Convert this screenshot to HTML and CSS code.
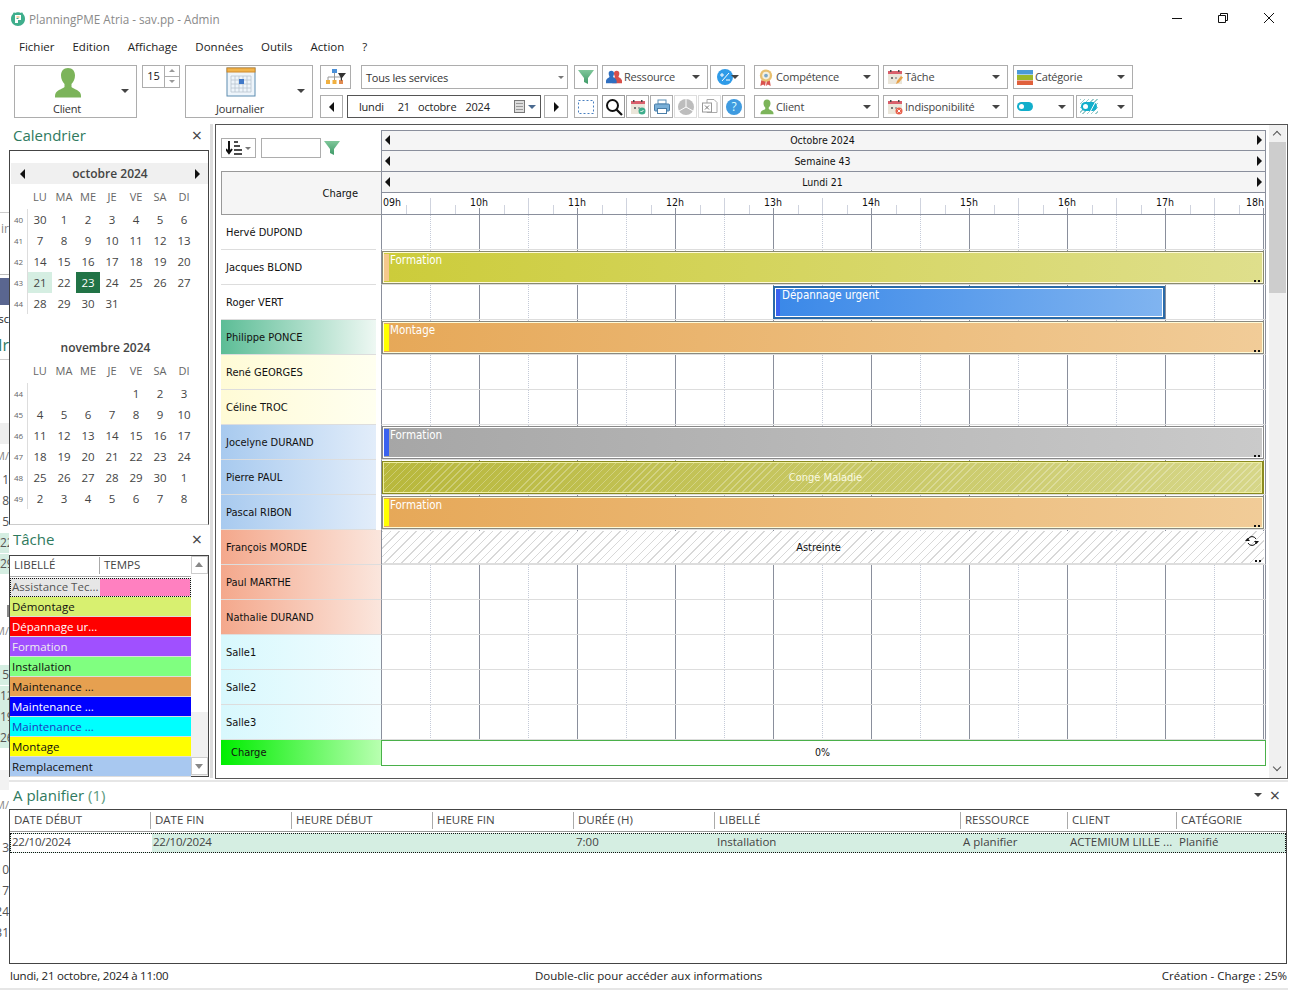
FILE: index.html
```
<!DOCTYPE html>
<html lang="fr">
<head>
<meta charset="utf-8">
<title>PlanningPME Atria</title>
<link rel="stylesheet" href="styles.css">
</head>
<body>
<svg class="defs" width="0" height="0">
  <defs>
    <linearGradient id="fg" x1="0" y1="0" x2="0" y2="1"><stop offset="0" stop-color="#7fc79a"/><stop offset="1" stop-color="#3f9a68"/></linearGradient>
    <symbol id="person" viewBox="0 0 28 32"><path d="M14 1c4.500 0 7 3 7 7.500 0 3.500-1.500 6.500-3.500 8.500v3c1 1.500 6 2.500 8.500 5.500 1 1.500 1 3 1 5H1c0-2 0-3.500 1-5 2.500-3 7.500-4 8.500-5.500v-3C8.500 15 7 12 7 8.500 7 4 9.500 1 14 1z" fill="#7cb45a"/></symbol>
    <symbol id="funnel" viewBox="0 0 16 16"><path d="M0 1h16L10 9v6l-4 -2V9z" fill="url(#fg)"/></symbol>
    <symbol id="cal" viewBox="0 0 16 16"><rect x="1" y="3" width="14" height="12" fill="#ebe6da"/><rect x="1" y="2" width="14" height="3" fill="#d9606c"/><rect x="3" y="1" width="1.500" height="2" fill="#444"/><rect x="11" y="1" width="1.500" height="2" fill="#444"/><rect x="4" y="8" width="2" height="2" fill="#777"/><rect x="8" y="8" width="2" height="2" fill="#aaa"/></symbol>
  </defs>
</svg>
<div class="app">
  <div class="strip">
    <span class="bit b1"></span><span class="bit b2">ir</span><span class="bit b3"></span><span class="bit b4"></span><span class="bit b5">sc</span><span class="bit b6">Ir</span><span class="bit b7"></span><span class="bit b8"></span><span class="bit b9">M/</span><span class="bit b10">1</span><span class="bit b11">8</span><span class="bit b12">15</span><span class="bit b13">22</span><span class="bit b14">29</span><span class="bit b15"></span><span class="bit b16">M/</span><span class="bit b17">5</span><span class="bit b18">12</span><span class="bit b19">19</span><span class="bit b20">26</span><span class="bit b21"></span><span class="bit b22">M/</span><span class="bit b23">3</span><span class="bit b24">10</span><span class="bit b25">17</span><span class="bit b26">24</span><span class="bit b27">31</span>
  </div>

  <header class="titlebar">
    <svg class="logo" viewBox="0 0 16 16" width="16" height="16"><path d="M3 3c0-1 1-2 2-1 1-1 5-1 6 0 1-1 2 0 2 1 1.500 1 2 3 2 5 0 4-3 7-7 7S1 12 1 8c0-2 .5-4 2-5z" fill="#3fae8c"/><path d="M5 4h6v5H8v3H5z" fill="#fff"/><rect x="6.500" y="5.500" width="3" height="1" fill="#e6a24a"/><rect x="6.500" y="7" width="2" height="1" fill="#3fae8c"/></svg>
    <span class="apptitle">PlanningPME Atria - sav.pp - Admin</span>
    <div class="winctl">
      <svg viewBox="0 0 12 12" width="12" height="12"><path d="M1 6.500h10" stroke="#111" fill="none"/></svg>
      <svg viewBox="0 0 12 12" width="12" height="12"><path d="M1.500 3.500h7v7h-7zM3.500 3.500v-2h7v7h-2" stroke="#111" fill="none"/></svg>
      <svg viewBox="0 0 12 12" width="12" height="12"><path d="M1 1l10 10M11 1L1 11" stroke="#111" fill="none"/></svg>
    </div>
  </header>

  <nav class="menu"><span>Fichier</span><span>Edition</span><span>Affichage</span><span>Données</span><span>Outils</span><span>Action</span><span>?</span></nav>

  <section class="toolbar">
    <div class="btn big w-client">
      <svg class="bigicon" width="28" height="32"><use href="#person"/></svg>
      <span class="biglabel">Client</span><i class="caret bigcaret"></i>
    </div>
    <div class="spin"><span class="spinval">15</span><span class="spinarrows"><i class="up"></i><i class="down"></i></span></div>
    <div class="btn big w-journal">
      <svg class="bigicon" viewBox="0 0 30 30" width="30" height="30"><rect x="1" y="1" width="28" height="28" fill="#eef5fb" stroke="#5c8cb0"/><rect x="1" y="1" width="28" height="4" fill="#f0b44c" stroke="#d08a2a"/><path d="M5 9h20M5 13h20M5 17h20M5 21h20M5 25h20M5 9v16M9 9v16M13 9v16M17 9v16M21 9v16M25 9v16" stroke="#b9c4cf" stroke-width=".8" fill="none"/><rect x="13" y="12" width="5" height="5" fill="#3f78c8"/></svg>
      <span class="biglabel">Journalier</span><i class="caret bigcaret"></i>
    </div>

    <div class="col c-mid">
      <div class="r1 gap10">
        <div class="btn w31"><svg viewBox="0 0 22 16" width="22" height="16"><rect x="7" y="0" width="5" height="4" fill="#4a90d9"/><path d="M9.500 4v4M3 11V8h13v3M9.500 8v3" stroke="#999" fill="none"/><rect x="1" y="11" width="4" height="4" fill="#f0b040"/><rect x="7.500" y="11" width="4" height="4" fill="#f0b040"/><rect x="14" y="11" width="4" height="4" fill="#e08a50"/><path d="M13 4h8l-4 5v3l-1-1V9z" fill="#333"/></svg></div>
        <div class="btn select w-service"><span>Tous les services</span><i class="caret tiny"></i></div>
      </div>
      <div class="r2 gap3">
        <div class="btn w23 mr1"><i class="tri left"></i></div>
        <div class="date"><span class="d1">lundi</span><span class="d2">21</span><span class="d3">octobre</span><span class="d4">2024</span>
          <svg class="dcal" viewBox="0 0 12 14" width="12" height="14"><rect x=".5" y=".5" width="10" height="12" fill="#ddd" stroke="#777"/><path d="M2 3h7v1H2zM2 6h7v1H2zM2 9h7v1H2z" fill="#999"/></svg><i class="caret cblue"></i>
        </div>
        <div class="btn w24"><i class="tri right"></i></div>
      </div>
    </div>

    <div class="col c-filter">
      <div class="r1"><div class="btn w24"><svg width="16" height="16"><use href="#funnel"/></svg></div></div>
      <div class="r2"><div class="btn w24"><svg viewBox="0 0 16 16" width="16" height="16"><rect x=".5" y="1.500" width="15" height="13" fill="none" stroke="#4a80c0" stroke-dasharray="2 2"/></svg></div></div>
    </div>

    <div class="col c-res">
      <div class="r1 gap2">
        <div class="btn drop w-res"><svg viewBox="0 0 18 16" width="16" height="16"><path d="M12 1c2 0 3 1 3 3s-1 3-1 4c1 1 3 1 4 4v3H7V11c1-2 3-2 3-3S9 6 9 4s1-3 3-3z" fill="#d84f4a"/><path d="M6 1c2 0 3 1 3 3s-1 3-1 4c1 1 4 2 4 5v2H0v-2c0-3 3-4 4-5 0-1-1-2-1-4s1-3 3-3z" fill="#2f6fc0"/></svg><span>Ressource</span><i class="caret"></i></div>
        <div class="btn w-pct"><svg viewBox="0 0 16 16" width="16" height="16"><circle cx="8" cy="8" r="8" fill="#2f9be8"/><path d="M3 6h4M5 4v4M12 4l-7 8M9 11h4" stroke="#fff" fill="none"/></svg><i class="caret"></i></div>
      </div>
      <div class="r2 gap1">
        <div class="btn dark w23"><svg viewBox="0 0 18 18" width="18" height="18"><circle cx="7.500" cy="7.500" r="5.500" fill="none" stroke="#111" stroke-width="2"/><path d="M11.500 11.500L17 17" stroke="#111" stroke-width="2.200"/></svg></div>
        <div class="btn w23"><svg viewBox="0 0 16 16" width="16" height="16"><use href="#cal"/><circle cx="12" cy="12" r="3.500" fill="#3fae8c"/><path d="M10.500 12l1 1 2-2" stroke="#fff" fill="none"/></svg></div>
        <div class="btn w23"><svg viewBox="0 0 16 16" width="16" height="16"><rect x="4" y="1" width="8" height="4" fill="#fff" stroke="#5a8fb8"/><rect x=".5" y="5" width="15" height="7" rx="1" fill="#7ab0d8" stroke="#4a7ea8"/><rect x="3.500" y="9.500" width="9" height="5" fill="#fff" stroke="#4a7ea8"/></svg></div>
        <div class="btn soft w23"><svg viewBox="0 0 16 16" width="16" height="16"><circle cx="8" cy="8" r="8" fill="#bdbdbd"/><path d="M8 8V0M8 8l7 4M8 8l-7 4" stroke="#fff"/></svg></div>
        <div class="btn soft w23"><svg viewBox="0 0 16 16" width="16" height="16"><path d="M5 .5h7l3 3v10H5z" fill="#fff" stroke="#aaa"/><rect x=".5" y="4" width="9" height="9" fill="#fff" stroke="#999"/><path d="M3 6.500l4 4M7 6.500l-4 4" stroke="#777"/></svg></div>
        <div class="btn w23"><svg viewBox="0 0 16 16" width="16" height="16"><circle cx="8" cy="8" r="8" fill="#3f9be0"/><text x="8" y="12" class="qm">?</text></svg></div>
      </div>
    </div>

    <div class="col c-125 ml9">
      <div class="r1"><div class="btn drop fullw"><svg viewBox="0 0 16 18" width="16" height="17"><path d="M3 12l-1 6 3-1.500L7 18l1-6zM9 12l-1 6 2-1.500 3 1.500-1-6z" fill="#d9534f"/><circle cx="8" cy="7" r="6.500" fill="#e8c070"/><circle cx="8" cy="7" r="4" fill="#f4f0e0"/><circle cx="8" cy="7" r="2" fill="#7ba7c8"/></svg><span>Compétence</span><i class="caret"></i></div></div>
      <div class="r2"><div class="btn drop fullw"><svg class="ml2" width="14" height="16"><use href="#person"/></svg><span>Client</span><i class="caret"></i></div></div>
    </div>
    <div class="col c-125">
      <div class="r1"><div class="btn drop fullw"><svg viewBox="0 0 16 16" width="16" height="16"><use href="#cal"/><path d="M9 15l1-3 4-5 2 1.500-4 5z" fill="#e8a24a"/></svg><span>Tâche</span><i class="caret"></i></div></div>
      <div class="r2"><div class="btn drop fullw"><svg viewBox="0 0 16 16" width="16" height="16"><use href="#cal"/><circle cx="12" cy="12" r="3.500" fill="#e8604c"/><path d="M10.500 10.500l3 3M13.500 10.500l-3 3" stroke="#fff" fill="none"/></svg><span>Indisponibilité</span><i class="caret"></i></div></div>
    </div>
    <div class="col c-120">
      <div class="r1"><div class="btn drop fullw"><svg viewBox="0 0 16 15" width="16" height="15"><rect width="16" height="4.500" fill="#4a9ad8"/><rect y="5" width="16" height="5" fill="#9cb82c"/><rect y="10.500" width="16" height="4.500" fill="#e0603c"/></svg><span>Catégorie</span><i class="caret"></i></div></div>
      <div class="r2 gap2">
        <div class="btn drop w61"><svg viewBox="0 0 16 9" width="16" height="9"><rect width="16" height="9" rx="4.500" fill="#12aecb"/><circle cx="4.500" cy="4.500" r="2.500" fill="#fff"/></svg><span></span><i class="caret"></i></div>
        <div class="btn drop w57"><i class="hatchpill"><svg viewBox="0 0 16 9" width="16" height="9"><rect width="16" height="9" rx="4.500" fill="#12aecb"/><circle cx="4.500" cy="4.500" r="2.500" fill="#fff"/><path d="M9 10l6-11" stroke="#fff"/></svg></i><span></span><i class="caret"></i></div>
      </div>
    </div>
  </section>

  <main class="work">
    <aside class="side">
      <div class="paneltitle pcal"><span>Calendrier</span><b class="x">×</b></div>
      <div class="calbox">
        <div class="calhead first"><i class="tri left"></i><strong>octobre 2024</strong><i class="tri right"></i></div>
        <div class="calgrid">
          <i></i><em>LU</em><em>MA</em><em>ME</em><em>JE</em><em>VE</em><em>SA</em><em>DI</em>
          <u>40</u><span>30</span><span>1</span><span>2</span><span>3</span><span>4</span><span>5</span><span>6</span>
          <u>41</u><span>7</span><span>8</span><span>9</span><span>10</span><span>11</span><span>12</span><span>13</span>
          <u>42</u><span>14</span><span>15</span><span>16</span><span>17</span><span>18</span><span>19</span><span>20</span>
          <u>43</u><span class="today">21</span><span>22</span><span class="sel">23</span><span>24</span><span>25</span><span>26</span><span>27</span>
          <u>44</u><span>28</span><span>29</span><span>30</span><span>31</span><span></span><span></span><span></span>
        </div>
        <div class="calhead second"><strong>novembre 2024</strong></div>
        <div class="calgrid">
          <i></i><em>LU</em><em>MA</em><em>ME</em><em>JE</em><em>VE</em><em>SA</em><em>DI</em>
          <u>44</u><span></span><span></span><span></span><span></span><span>1</span><span>2</span><span>3</span>
          <u>45</u><span>4</span><span>5</span><span>6</span><span>7</span><span>8</span><span>9</span><span>10</span>
          <u>46</u><span>11</span><span>12</span><span>13</span><span>14</span><span>15</span><span>16</span><span>17</span>
          <u>47</u><span>18</span><span>19</span><span>20</span><span>21</span><span>22</span><span>23</span><span>24</span>
          <u>48</u><span>25</span><span>26</span><span>27</span><span>28</span><span>29</span><span>30</span><span>1</span>
          <u>49</u><span>2</span><span>3</span><span>4</span><span>5</span><span>6</span><span>7</span><span>8</span>
        </div>
      </div>
      <div class="paneltitle ptask"><span>Tâche</span><b class="x">×</b></div>
      <div class="tasks">
        <div class="tasklist">
          <div class="taskhead"><span class="th1">LIBELLÉ</span><span class="th2">TEMPS</span></div>
          <div class="task t-assist"><span>Assistance Tec...</span><i></i></div>
          <div class="task t-demo"><span>Démontage</span></div>
          <div class="task t-dep"><span>Dépannage ur...</span></div>
          <div class="task t-form"><span>Formation</span></div>
          <div class="task t-inst"><span>Installation</span></div>
          <div class="task t-mnt"><span>Maintenance ...</span></div>
          <div class="task t-mnb"><span>Maintenance ...</span></div>
          <div class="task t-mnc"><span>Maintenance ...</span></div>
          <div class="task t-mont"><span>Montage</span></div>
          <div class="task t-rem"><span>Remplacement</span></div>
        </div>
        <div class="tscroll"><div class="sb-btn"><i class="up"></i></div><div class="sb-thumb"></div><div class="sb-rest"></div><div class="sb-btn"><i class="down"></i></div></div>
      </div>
    </aside>
    <div class="splitter"></div>

    <section class="gantt">
      <div class="gantt-main">
        <div class="ghead">
          <div class="ghead-left">
            <div class="sorter">
              <div class="sortbtn"><svg viewBox="0 0 16 14" width="16" height="14"><path d="M3 0v11M0 8l3 4 3-4" stroke="#111" stroke-width="2" fill="none"/><path d="M8 1h4M8 5h6M8 9h8M8 13h8" stroke="#111" stroke-width="1.500"/></svg><i class="caret tiny"></i></div>
              <div class="sortinput"></div>
              <svg width="16" height="16"><use href="#funnel"/></svg>
            </div>
            <div class="chargehead">Charge</div>
          </div>
          <div class="ghead-right">
            <div class="tl tl1"><i class="tri left"></i><span>Octobre 2024</span><i class="tri right"></i></div>
            <div class="tl"><i class="tri left"></i><span>Semaine 43</span><i class="tri right"></i></div>
            <div class="tl"><i class="tri left"></i><span>Lundi 21</span><i class="tri right"></i></div>
            <div class="ruler"><span class="h0">09h</span><span>10h</span><span>11h</span><span>12h</span><span>13h</span><span>14h</span><span>15h</span><span>16h</span><span>17h</span><span class="hl">18h</span></div>
          </div>
        </div>
        <div class="rows">
          <div class="row"><div class="name">Hervé DUPOND</div><div class="track"></div></div>
          <div class="row"><div class="name">Jacques BLOND</div><div class="track"><div class="bar bar-olive"><i class="stripe s-peach"></i><span>Formation</span><b class="dots"></b></div></div></div>
          <div class="row"><div class="name">Roger VERT</div><div class="track"><div class="bar bar-blue"><i class="stripe s-blue"></i><span>Dépannage urgent</span></div></div></div>
          <div class="row"><div class="name g-green">Philippe PONCE</div><div class="track"><div class="bar bar-orange"><i class="stripe s-yellow"></i><span>Montage</span><b class="dots"></b></div></div></div>
          <div class="row"><div class="name g-yellow">René GEORGES</div><div class="track"></div></div>
          <div class="row"><div class="name g-yellow">Céline TROC</div><div class="track"></div></div>
          <div class="row"><div class="name g-blue">Jocelyne DURAND</div><div class="track"><div class="bar bar-gray"><i class="stripe s-blue"></i><span>Formation</span><b class="dots"></b></div></div></div>
          <div class="row"><div class="name g-blue">Pierre PAUL</div><div class="track"><div class="bar conge"><span class="mid">Congé Maladie</span></div></div></div>
          <div class="row"><div class="name g-blue">Pascal RIBON</div><div class="track"><div class="bar bar-orange"><i class="stripe s-yellow"></i><span>Formation</span><b class="dots"></b></div></div></div>
          <div class="row"><div class="name g-salmon">François MORDE</div><div class="track"><div class="bar astreinte"><span class="mid">Astreinte</span><svg class="sync" viewBox="0 0 14 14" width="14" height="14"><path d="M3 5a4.500 4.500 0 0 1 8 0M11 9a4.500 4.500 0 0 1-8 0" fill="none" stroke="#111"/><path d="M0 7h5L2.500 4zM9 7h5l-2.500 3z" fill="#111"/></svg><b class="dots"></b></div></div></div>
          <div class="row"><div class="name g-salmon">Paul MARTHE</div><div class="track"></div></div>
          <div class="row"><div class="name g-salmon">Nathalie DURAND</div><div class="track"></div></div>
          <div class="row"><div class="name g-cyan">Salle1</div><div class="track"></div></div>
          <div class="row"><div class="name g-cyan">Salle2</div><div class="track"></div></div>
          <div class="row"><div class="name g-cyan">Salle3</div><div class="track"></div></div>
          <div class="row rowcharge"><div class="name g-charge">Charge</div><div class="chargebar">0%</div></div>
        </div>
      </div>
      <div class="gscroll"><div class="sb-btn2"><i class="chev"></i></div><div class="gthumb"></div><div class="gtrack"></div><div class="sb-btn2"><i class="chev dn"></i></div></div>
    </section>
  </main>

  <section class="bottom">
    <div class="paneltitle pbottom"><span>A planifier <small>(1)</small></span><i class="caret small"></i><b class="x">×</b></div>
    <div class="tablebox">
      <div class="cols thead"><span>DATE DÉBUT</span><span>DATE FIN</span><span>HEURE DÉBUT</span><span>HEURE FIN</span><span>DURÉE (H)</span><span>LIBELLÉ</span><span>RESSOURCE</span><span>CLIENT</span><span>CATÉGORIE</span></div>
      <div class="cols tbody"><span class="c-first">22/10/2024</span><span class="c-date">22/10/2024</span><span></span><span></span><span>7:00</span><span>Installation</span><span>A planifier</span><span>ACTEMIUM LILLE ...</span><span>Planifié</span></div>
    </div>
  </section>

  <footer class="status"><span class="st-left">lundi, 21 octobre, 2024 à 11:00</span><span class="st-mid">Double-clic pour accéder aux informations</span><span>Création - Charge : 25%</span></footer>
</div>
</body>
</html>
```
FILE: styles.css
```
* { box-sizing: border-box; }
html, body { margin: 0; padding: 0; background: #fff; }
body { font-family: "Open Sans", "Noto Sans", sans-serif; font-size: 11.5px; color: #222; overflow: hidden; }
i { font-style: normal; display: block; }
.defs { position: absolute; }
.app { position: relative; width: 1296px; height: 992px; display: flex; flex-direction: column; overflow: hidden; }

/* leftovers of the window behind, visible in the 9px margin */
.strip { position: absolute; left: 0; top: 0; width: 9px; height: 992px; overflow: hidden; color: #555; font-size: 12px; line-height: 14px; }
.bit { position: absolute; right: 0; white-space: nowrap; }
.b1 { top: 212px; width: 9px; height: 1px; background: #ccc; }
.b2 { top: 222px; color: #888; }
.b3 { top: 274px; width: 9px; height: 1px; background: #bbb; }
.b4 { top: 278px; width: 9px; height: 27px; background: #5a6690; }
.b5 { top: 312px; color: #222; font-size: 11px; }
.b6 { top: 336px; color: #2f7a5e; font-size: 16px; line-height: 18px; }
.b7 { top: 359px; width: 9px; height: 1px; background: #ccc; }
.b8 { top: 423px; width: 9px; height: 21px; background: #eee; }
.b9 { top: 449px; font-size: 11px; color: #888; }
.b10 { top: 473px; }
.b11 { top: 494px; }
.b12 { top: 515px; }
.b13 { top: 533px; width: 9px; height: 20px; background: #d5eee2; line-height: 20px; }
.b14 { top: 554px; width: 9px; height: 20px; background: #d5eee2; line-height: 20px; }
.b15 { top: 605px; right: 0; width: 2px; height: 12px; background: #888; }
.b16 { top: 624px; font-size: 11px; color: #888; }
.b17 { top: 665px; width: 9px; height: 20px; background: #d5eee2; line-height: 20px; text-align: right; }
.b18 { top: 686px; width: 9px; height: 21px; background: #d5eee2; line-height: 20px; }
.b19 { top: 707px; width: 9px; height: 21px; background: #d5eee2; line-height: 20px; }
.b20 { top: 728px; width: 9px; height: 20px; background: #d5eee2; line-height: 20px; }
.b21 { top: 770px; width: 9px; height: 20px; background: #f2f2f2; }
.b22 { top: 798px; font-size: 11px; color: #888; }
.b23 { top: 841px; }
.b24 { top: 863px; }
.b25 { top: 884px; }
.b26 { top: 905px; }
.b27 { top: 926px; }

/* title bar */
.titlebar { height: 38px; flex: none; display: flex; align-items: center; padding-left: 10px; position: relative; }
.apptitle { margin-left: 3px; color: #8a8a8a; font-size: 11.7px; }
.winctl { margin-left: auto; display: flex; gap: 34px; padding-right: 21px; margin-top: -3px; }

.menu { height: 18px; flex: none; display: flex; padding: 0 0 1px 19px; align-items: center; line-height: 17px; }
.menu span { margin-right: 18px; }

/* toolbar */
.toolbar { flex: none; display: flex; margin: 9px 0 0 14px; height: 53px; }
.btn { border: 1px solid #adadad; background: #fff; display: flex; align-items: center; justify-content: center; flex: none; color: #444; font-size: 11px; letter-spacing: -.2px; }
.btn.dark { border-color: #999; }
.btn.soft { border-color: #ddd; }
.big { height: 53px; position: relative; flex-direction: column; justify-content: flex-start; color: #333; }
.w-client { width: 123px; }
.w-journal { width: 128px; margin-left: 5px; }
.bigicon { margin-top: 1px; position: relative; left: -8px; }
.biglabel { position: absolute; bottom: 0; left: 0; right: 0; text-align: center; line-height: 15px; padding: 0 17px 1px 0; }
.w-journal .biglabel { padding-right: 18px; }
.w-journal .bigicon { left: -8px; }
.bigcaret { position: absolute; right: 7px; top: 23px; }
.caret { width: 0; height: 0; border-left: 4px solid transparent; border-right: 4px solid transparent; border-top: 4px solid #444; flex: none; }
.caret.tiny { border-width: 3px 3px 0; border-top-color: #777; }
.caret.cblue { border-top-color: #4a6a90; margin-left: 2px; }
.spin { width: 38px; height: 23px; margin-left: 5px; border: 1px solid #adadad; display: flex; flex: none; }
.spinval { width: 21px; line-height: 19px; text-align: center; font-size: 11px; color: #111; }
.spinarrows { flex: 1; border-left: 1px solid #adadad; display: flex; flex-direction: column; }
.up, .down { flex: 1; position: relative; }
.up { border-bottom: 1px solid #adadad; }
.up::after, .down::after { content: ""; position: absolute; left: 4px; top: 3px; border-left: 3px solid transparent; border-right: 3px solid transparent; }
.up::after { border-bottom: 3px solid #999; }
.down::after { border-top: 3px solid #999; }

.col { display: flex; flex-direction: column; gap: 6px; flex: none; }
.r1 { height: 24px; display: flex; }
.r1 .drop span { padding-bottom: 1px; }
.r2 { height: 23px; display: flex; }
.gap10 { gap: 10px; }
.gap3 { gap: 3px; }
.gap2 { gap: 2px; }
.gap1 { gap: 1px; }
.mr1 { margin-right: 1px; }
.c-mid { width: 248px; margin-left: 7px; }
.c-filter { width: 24px; margin-left: 6px; }
.c-res { width: 143px; margin-left: 4px; }
.c-125 { width: 125px; margin-left: 4px; }
.ml9 { margin-left: 9px; }
.ml2 { margin-left: 2px; }
.c-120 { width: 120px; margin-left: 5px; }
.w23 { width: 23px; }
.w24 { width: 24px; }
.w31 { width: 31px; }
.w61 { width: 61px; }
.w57 { width: 57px; }
.w-service { width: 207px; justify-content: space-between; padding: 1px 3px 0 4px; color: #333; }
.date { width: 194px; border: 1px solid #555; display: flex; align-items: center; position: relative; font-size: 11px; letter-spacing: -.2px; color: #222; padding-left: 11px; flex: none; }
.d2 { margin-left: 14px; }
.d3 { margin-left: 8px; }
.d4 { margin-left: 9px; }
.dcal { margin-left: 24px; }
.tri { width: 0; height: 0; border-top: 5px solid transparent; border-bottom: 5px solid transparent; flex: none; }
.tri.left { border-right: 5px solid #111; }
.tri.right { border-left: 5px solid #111; }
.w-res { width: 106px; }
.w-pct { width: 35px; gap: 0; }
.w-pct .caret { margin-left: -2px; }
.drop { justify-content: flex-start; padding: 0 7px 0 3px; gap: 2px; }
.drop span { flex: 1; white-space: nowrap; }
.fullw { width: 100%; }
.qm { font: 12px "Open Sans", sans-serif; fill: #dff; text-anchor: middle; }
.hatchpill { background: repeating-linear-gradient(135deg, #9cc 0 1px, #fff 1px 3px); padding: 3px 1px; display: flex; }

/* work area */
.work { flex: none; height: 656px; margin-top: 6px; display: flex; padding-left: 9px; }
.side { width: 200px; flex: none; display: flex; flex-direction: column; }
.paneltitle { display: flex; align-items: center; justify-content: space-between; color: #2f7a5e; font-size: 15px; line-height: 20px; padding-left: 4px; flex: none; }
.paneltitle .x { font-weight: 400; color: #444; font-size: 18px; padding-right: 7px; line-height: 16px; }
.pcal { height: 26px; padding-bottom: 4px; }
.ptask { height: 30px; padding-bottom: 3px; }
.calbox { height: 375px; border: 1px solid #444; border-bottom: 1px solid #ccc; flex: none; }
.calhead { background: #f0f0f0; height: 21px; display: flex; align-items: center; justify-content: space-between; padding: 0 8px 0 9px; color: #444; font-size: 12px; margin-left: 1px; }
.calhead strong { font-weight: 600; }
.calhead.first { margin-top: 12px; }
.calhead.second { margin-top: 23px; background: transparent; justify-content: center; padding: 0 8px 0 0; }
.calgrid { display: grid; grid-template-columns: 18px repeat(7, 24px); grid-template-rows: 25px; grid-auto-rows: 21px; align-items: center; justify-items: center; color: #444; }
.calgrid em { font-style: normal; font-size: 11px; color: #666; }
.calgrid u { text-decoration: none; font-size: 8px; color: #666; width: 100%; height: 100%; text-align: center; line-height: 21px; border-right: 1px solid #ddd; }
.calgrid span { width: 24px; height: 21px; text-align: center; line-height: 21px; }
.calgrid .today { background: #d5eee2; }
.calgrid .sel { background: #217346; color: #fff; }

.tasks { height: 222px; border: 1px solid #444; display: flex; flex: none; }
.tasklist { flex: none; width: 181px; background: #fff; }
.taskhead { height: 21px; display: flex; color: #444; border-bottom: 1px solid #aaa; }
.th1 { width: 90px; padding-left: 4px; border-right: 1px solid #aaa; height: 17px; margin-top: 1px; line-height: 16px; }
.th2 { padding-left: 4px; height: 17px; margin-top: 1px; line-height: 16px; }
.task { height: 20px; line-height: 19px; padding-left: 2px; border-bottom: 1px solid #ddd; display: flex; color: #111; white-space: nowrap; }
.task span { flex: none; }
.t-assist { padding: 0; border: 1px dotted #111; color: #555; background: #e6e6e6; height: 19px; line-height: 16px; margin-top: 1px; }
.t-assist span { width: 89px; padding-left: 1px; }
.t-assist i { flex: 1; background: #ff80c0; }
.t-demo { background: #d8f070; }
.t-dep { background: #ff0000; color: #fff; }
.t-form { background: #a050ff; color: #eee; }
.t-inst { background: #80ff80; }
.t-mnt { background: #e6a050; }
.t-mnb { background: #0000ff; color: #fff; }
.t-mnc { background: #00ffff; color: #1a3cc0; }
.t-mont { background: #ffff00; }
.t-rem { background: #a8c8f0; }
.tscroll { flex: 1; display: flex; flex-direction: column; background: #f0f0f0; padding: 0 0 1px; }
.sb-btn { height: 18px; border: 1px solid #ccc; background: #fff; flex: none; position: relative; }
.sb-btn .up, .sb-btn .down { position: absolute; inset: 0; border: 0; }
.sb-btn .up::after { left: 3px; top: 5px; border-left-width: 4px; border-right-width: 4px; border-bottom: 5px solid #888; }
.sb-btn .down::after { left: 3px; top: 6px; border-left-width: 4px; border-right-width: 4px; border-top: 5px solid #888; }
.sb-thumb { height: 138px; background: #fff; flex: none; }
.sb-rest { flex: 1; }

.splitter { width: 3px; margin-left: 1px; flex: none; background: #ddd; height: 654px; }
.gantt { width: 1073px; margin-left: 2px; height: 655px; flex: none; border: 1px solid #555; display: flex; padding-left: 5px; }
.gantt-main { width: 1045px; flex: none; }
.ghead { display: flex; height: 90px; }
.ghead-left { width: 160px; flex: none; display: flex; flex-direction: column; }
.sorter { height: 46px; display: flex; align-items: center; }
.sortbtn { width: 35px; height: 20px; border: 1px solid #adadad; display: flex; align-items: center; justify-content: center; gap: 3px; }
.sortinput { width: 60px; height: 20px; border: 1px solid #adadad; margin: 0 3px 0 5px; }
.chargehead { flex: 1; height: 44px; background: #f5f5f5; border: 1px solid #999; border-right: 0; text-align: right; padding-right: 23px; line-height: 44px; font-size: 11px; font-family: "DejaVu Sans Condensed", "DejaVu Sans", sans-serif; color: #111; }
.ghead-right { width: 885px; margin-top: 5px; flex: none; border: 1px solid #8a8f9c; background: #f5f5f5; display: flex; flex-direction: column; }
.tl { height: 21px; border-bottom: 1px solid #8a8f9c; display: flex; align-items: center; justify-content: space-between; padding: 0 3px; font-family: "DejaVu Sans Condensed", "DejaVu Sans", sans-serif; font-size: 10.5px; color: #111; }
.tl1 { height: 20px; padding-bottom: 1px; }
.tl span { position: relative; left: -1px; }
.ruler { flex: 1; display: flex; background-color: #fff; font-family: "DejaVu Sans Condensed", "DejaVu Sans", sans-serif; font-size: 10.5px; color: #111; line-height: 18px;
  background-image:
    linear-gradient(to right, transparent 97px, #8a8f9c 97px, #8a8f9c 98px),
    linear-gradient(to right, transparent 48px, #cfd3de 48px, #cfd3de 49px, transparent 49px),
    linear-gradient(to right, transparent 24px, #cfd3de 24px, #cfd3de 25px, transparent 25px);
  background-size: 98px 6px, 98px 16px, 49px 9px;
  background-position: 0 100%, 0 100%, 0 100%;
  background-repeat: repeat-x;
}
.ruler span { width: 98px; text-align: center; flex: none; }
.ruler .h0 { width: 48px; text-align: left; padding-left: 1px; }
.ruler .hl { flex: 1; width: auto; text-align: right; padding-right: 1px; }

.rows { display: flex; flex-direction: column; }
.row { display: flex; height: 35px; flex: none; }
.name { width: 155px; margin-right: 5px; height: 35px; flex: none; border-bottom: 1px solid #ddd; padding-left: 5px; line-height: 35px; font-family: "DejaVu Sans Condensed", "DejaVu Sans", sans-serif; font-size: 11px; color: #111; white-space: nowrap; }
.g-green { background: linear-gradient(to right, #5cbd96, #eef8f3); }
.g-yellow { background: linear-gradient(to right, #fffbd6, #fffff0); }
.g-blue { background: linear-gradient(to right, #a8caef, #e2edfa); }
.g-salmon { background: linear-gradient(to right, #f4a88c, #fbe6dd); width: 160px; margin-right: 0; }
.g-cyan { background: linear-gradient(to right, #d8f8fd, #f2fdff); width: 160px; margin-right: 0; }
.track { width: 885px; height: 35px; flex: none; border-left: 1px solid #8a8f9c; border-right: 1px solid #8a8f9c; border-bottom: 1px solid #ddd; padding-top: 1px; position: relative;
  background-image:
    linear-gradient(to right, transparent 97px, #8a8f9c 97px, #8a8f9c 98px),
    linear-gradient(#c4cad8 50%, transparent 50%), linear-gradient(#c4cad8 50%, transparent 50%), linear-gradient(#c4cad8 50%, transparent 50%),
    linear-gradient(#c4cad8 50%, transparent 50%), linear-gradient(#c4cad8 50%, transparent 50%), linear-gradient(#c4cad8 50%, transparent 50%),
    linear-gradient(#c4cad8 50%, transparent 50%), linear-gradient(#c4cad8 50%, transparent 50%), linear-gradient(#c4cad8 50%, transparent 50%);
  background-size: 98px 100%, 1px 2px, 1px 2px, 1px 2px, 1px 2px, 1px 2px, 1px 2px, 1px 2px, 1px 2px, 1px 2px;
  background-position: 0 0, 48px 0, 146px 0, 244px 0, 342px 0, 440px 0, 538px 0, 636px 0, 734px 0, 832px 0;
  background-repeat: repeat-x, repeat-y, repeat-y, repeat-y, repeat-y, repeat-y, repeat-y, repeat-y, repeat-y, repeat-y;
}
.bar { width: 882px; height: 33px; display: flex; border: 1px solid #8a8a70; box-shadow: inset 0 0 0 1px #fffbd8; padding: 2px 2px 2px 1px; color: #fff; font-size: 11.5px; font-family: "DejaVu Sans Condensed", "DejaVu Sans", sans-serif; line-height: 13px; position: relative; }
.bar > span { margin-left: 1px; }
.stripe { width: 5px; flex: none; }
.s-peach { background: #f5c88c; }
.s-yellow { background: #ffff00; }
.s-blue { background: #3a62f0; }
.bar-olive { background: linear-gradient(to right, #cccc3a, #dfdf8c); }
.bar-orange { background: linear-gradient(to right, #e6a858, #f1cc98); border-color: #8a8a80; }
.bar-gray { background: linear-gradient(to right, #a6a6a6, #cacaca); box-shadow: inset 0 0 0 1px #fff; border-color: #888; }
.bar-blue { width: 392px; margin-left: 391px; border: 2px solid #2a6aa8; box-shadow: inset 0 0 0 1px #fff; background: linear-gradient(to right, #3a88e8, #80b4f0); padding: 1px; }
.bar-blue .stripe { width: 4px; }
.bar-blue > span { margin-left: 2px; }
.conge { border: 1px solid #8a8a20; border-right-width: 2px; box-shadow: inset 0 0 0 1px #f0f0a0; background: repeating-linear-gradient(135deg, #ffffff45 0 1px, transparent 1px 5px), linear-gradient(to right, #b8b83c, #d6d688); }
.astreinte { border: 0; box-shadow: none; color: #111; background: repeating-linear-gradient(135deg, #d8d8d8 0 1px, #fff 1px 6px); border-bottom: 1px solid #ddd; }
.mid { position: absolute; left: 0; right: 0; top: 10px; text-align: center; margin: 0 !important; }
.conge .mid { left: 6px; top: 9px; color: #fafae0; font-size: 11px; }
.astreinte .mid { right: 9px; color: #111; font-size: 11px; }
.dots { position: absolute; right: 3px; bottom: 1px; width: 6px; height: 2px; background: linear-gradient(to right, #111 2px, transparent 2px, transparent 4px, #111 4px); }
.sync { position: absolute; right: 5px; top: 3px; }
.rowcharge { height: 26px; }
.g-charge { background: linear-gradient(to right, #00ee00, #b8ffb0); width: 160px; margin-right: 0; height: 25px; border: 0; line-height: 25px; padding-left: 10px; }
.chargebar { width: 885px; height: 26px; border: 1px solid #4ab04a; text-align: center; line-height: 23px; font-family: "DejaVu Sans Condensed", "DejaVu Sans", sans-serif; font-size: 10.5px; color: #111; padding-right: 2px; }

.gscroll { width: 17px; margin-left: 3px; flex: none; display: flex; flex-direction: column; background: #f0f0f0; }
.sb-btn2 { height: 17px; background: #f0f0f0; flex: none; position: relative; }
.chev { position: absolute; left: 5px; top: 7px; width: 6px; height: 6px; border-left: 1.5px solid #555; border-top: 1.5px solid #555; transform: rotate(45deg); }
.chev.dn { top: 3px; transform: rotate(225deg); }
.gthumb { height: 151px; background: #cdcdcd; flex: none; }
.gtrack { flex: 1; }

/* bottom */
.bottom { flex: none; border-top: 2px solid #e6e6e6; margin-left: 9px; width: 1279px; }
.pbottom { height: 27px; padding: 0 3px 2px 4px; justify-content: flex-start; }
.pbottom > span { flex: 1; }
.pbottom small { font-size: 15px; color: #5a9a80; }
.pbottom .caret { margin-right: 6px; }
.pbottom .x { padding-right: 5px; padding-left: 2px; }
.tablebox { width: 1278px; height: 155px; border: 1px solid #444; }
.cols { display: grid; grid-template-columns: 141px 141px 141px 141px 141px 246px 107px 109px 1fr; }
.thead { height: 22px; border-bottom: 1px solid #999; color: #444; }
.thead span { padding-left: 4px; height: 17px; margin-top: 2px; line-height: 15px; border-right: 1px solid #aaa; }
.thead span:last-child { border-right: 0; }
.tbody { height: 20px; margin-top: 1px; border: 1px dotted #111; background: #d5eee2; color: #444; line-height: 15px; }
.tbody span { padding-left: 1px; white-space: nowrap; overflow: hidden; }
.tbody .c-first { background: #fff; letter-spacing: -.25px; }
.tbody .c-date { letter-spacing: -.25px; }

.status { flex: none; margin: 3px 8px 0 0; height: 23px; display: flex; justify-content: space-between; padding: 0 1px 0 10px; border-bottom: 2px solid #e6e6e6; color: #222; line-height: 18px; position: relative; }
.st-left { letter-spacing: -.2px; }
.st-mid { position: absolute; left: 535px; }
```
